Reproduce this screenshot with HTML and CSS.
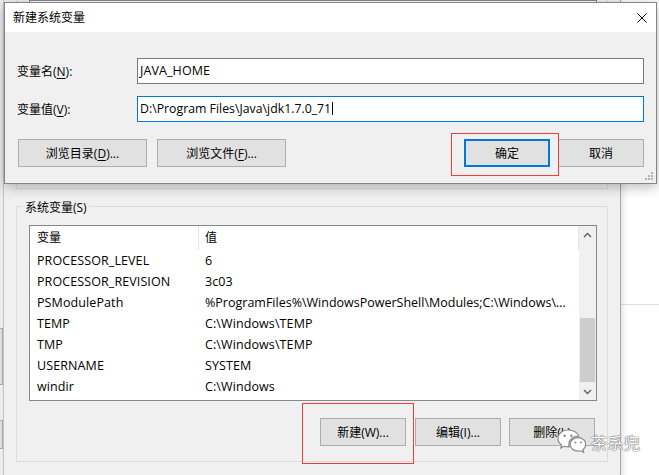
FILE: index.html
```html
<!DOCTYPE html>
<html lang="zh-CN">
<head>
<meta charset="utf-8">
<title>新建系统变量</title>
<link rel="stylesheet" href="styles.css">
</head>
<body>
<div class="desk">
  <!-- window peeking in on the far left -->
  <div class="left-win">
    <div class="stub stub-a"></div>
    <div class="stub stub-b"></div>
  </div>

  <!-- window on the right, behind everything -->
  <div class="right-win">
    <div class="right-rule"></div>
  </div>

  <!-- 环境变量 window -->
  <div class="back-win">
    <div class="group group-user">
      <div class="list list-user"></div>
    </div>

    <div class="group group-sys">
      <span class="group-label">系统变量(S)</span>
      <div class="list">
        <div class="cols">
          <div class="row head">
            <div class="cell">变量</div>
            <div class="cell">值</div>
          </div>
          <div class="row"><div class="cell latin">PROCESSOR_LEVEL</div><div class="cell latin">6</div></div>
          <div class="row"><div class="cell latin">PROCESSOR_REVISION</div><div class="cell latin">3c03</div></div>
          <div class="row"><div class="cell latin">PSModulePath</div><div class="cell latin tight">%ProgramFiles%\WindowsPowerShell\Modules;C:\Windows\...</div></div>
          <div class="row"><div class="cell latin">TEMP</div><div class="cell latin">C:\Windows\TEMP</div></div>
          <div class="row"><div class="cell latin">TMP</div><div class="cell latin">C:\Windows\TEMP</div></div>
          <div class="row"><div class="cell latin">USERNAME</div><div class="cell latin">SYSTEM</div></div>
          <div class="row"><div class="cell latin">windir</div><div class="cell latin">C:\Windows</div></div>
        </div>
        <div class="vscroll">
          <div class="arrow">
            <svg width="9" height="6" viewBox="0 0 9 6"><polyline points="1,5 4.5,1.5 8,5" fill="none" stroke="#606060" stroke-width="1.4"/></svg>
          </div>
          <div class="track"><div class="thumb"></div></div>
          <div class="arrow">
            <svg width="9" height="6" viewBox="0 0 9 6"><polyline points="1,1 4.5,4.5 8,1" fill="none" stroke="#606060" stroke-width="1.4"/></svg>
          </div>
        </div>
      </div>
      <div class="actions">
        <button class="btn btn-sm btn-new">新建(W)...</button>
        <button class="btn btn-sm">编辑(I)...</button>
        <button class="btn btn-sm">删除(L)</button>
      </div>
    </div>
  </div>

  <!-- 新建系统变量 dialog -->
  <div class="dialog">
    <div class="titlebar">
      <span class="title">新建系统变量</span>
      <svg class="close" width="10" height="10" viewBox="0 0 10 10"><path d="M0.5 0.5 L9.5 9.5 M9.5 0.5 L0.5 9.5" stroke="#000" stroke-width="1" fill="none"/></svg>
    </div>
    <div class="dialog-body">
      <div class="form">
        <label class="label">变量名(<u>N</u>):</label>
        <div class="input latin">JAVA_HOME</div>
        <label class="label">变量值(<u>V</u>):</label>
        <div class="input input-focus path">D:\Program Files\Java\jdk1.7.0_71<span class="caret"></span></div>
      </div>
      <div class="buttons">
        <div class="btn-group btn-group-left">
          <button class="btn btn-wide">浏览目录(<u>D</u>)...</button>
          <button class="btn btn-wide">浏览文件(<u>F</u>)...</button>
        </div>
        <div class="btn-group">
          <button class="btn btn-sm btn-default">确定</button>
          <button class="btn btn-sm">取消</button>
        </div>
      </div>
    </div>
    <svg class="grip" width="9" height="9" viewBox="0 0 9 9">
      <rect x="6" y="0" width="2" height="2" fill="#b4b4b4"/>
      <rect x="3" y="3" width="2" height="2" fill="#b4b4b4"/>
      <rect x="6" y="3" width="2" height="2" fill="#b4b4b4"/>
      <rect x="0" y="6" width="2" height="2" fill="#b4b4b4"/>
      <rect x="3" y="6" width="2" height="2" fill="#b4b4b4"/>
      <rect x="6" y="6" width="2" height="2" fill="#b4b4b4"/>
    </svg>
  </div>

  <!-- highlight frames -->
  <div class="mark mark-ok"></div>
  <div class="mark mark-new"></div>

  <!-- account mark -->
  <div class="brand">
    <svg class="brand-icon" width="30" height="30" viewBox="0 0 30 30">
      <g fill="#fff" stroke="#8a8a8a" stroke-width="1.2">
        <path d="M12 3 C6 3 2 7 2 11.5 C2 14.2 3.4 16.4 5.6 18 L4.8 21 L8.2 19.3 C9.4 19.7 10.7 19.9 12 19.9 C12.4 19.9 12.8 19.9 13.2 19.8 C12.9 19 12.8 18.2 12.8 17.4 C12.8 12.8 17 9.2 22.2 9.2 C22.4 9.2 22.6 9.2 22.8 9.2 C21.7 5.6 17.3 3 12 3 Z"/>
        <path d="M22.2 10.6 C17.7 10.6 14.2 13.6 14.2 17.4 C14.2 21.2 17.7 24.2 22.2 24.2 C23.1 24.2 24 24.1 24.8 23.8 L27.6 25.3 L26.9 22.7 C28.7 21.4 29.8 19.5 29.8 17.4 C29.8 13.6 26.4 10.6 22.2 10.6 Z"/>
      </g>
      <g fill="#8a8a8a">
        <circle cx="8.6" cy="8.8" r="1.2"/>
        <circle cx="15.4" cy="8.8" r="1.2"/>
        <circle cx="19.4" cy="15.6" r="1"/>
        <circle cx="25" cy="15.6" r="1"/>
      </g>
    </svg>
    <span class="brand-name">茶系兜</span>
  </div>
</div>
</body>
</html>
```

FILE: styles.css
```css
* {
  box-sizing: border-box;
}

body {
  margin: 0;
  font-family: "Open Sans", "Noto Sans CJK SC", sans-serif;
  font-size: 12px;
  color: #000;
}

u {
  text-decoration: underline;
  text-underline-offset: 2px;
}

.latin {
  font-size: 12.5px;
  letter-spacing: 0.1px;
}

.latin.tight {
  letter-spacing: 0;
}

.path {
  font-size: 12.3px;
}

/* desktop surface holding the windows */
.desk {
  position: relative;
  width: 659px;
  height: 475px;
  overflow: hidden;
  background: #fff;
}

.left-win {
  position: absolute;
  left: -100px;
  top: 0;
  width: 103px;
  height: 475px;
  background: #f0f0f0;
}

.stub {
  position: absolute;
  right: 0;
  width: 60px;
  background: #e1e1e1;
  border: 1px solid #adadad;
}

.stub-a {
  top: 328px;
  height: 57px;
}

.stub-b {
  top: 420px;
  height: 29px;
}

.right-win {
  position: absolute;
  left: 620px;
  top: 0;
  width: 60px;
  height: 475px;
  background: #fff;
}

.right-rule {
  margin-top: 304px;
  height: 1px;
  background: #dcdcdc;
}

/* environment variables window */
.back-win {
  position: absolute;
  left: 3px;
  top: 0;
  width: 618px;
  height: 480px;
  padding: 0 12px;
  background: #f0f0f0;
  border-left: 1px solid #c4c4c4;
  border-right: 1px solid #a8a8a8;
  box-shadow: 2px 0 6px rgba(0, 0, 0, 0.12);
}

.group {
  border: 1px solid #dcdcdc;
}

.group-user {
  height: 189px;
  padding-left: 12px;
  border-top: none;
}

.list-user {
  width: 568px;
  height: 170px;
  background: #fff;
  border: 1px solid #828790;
  border-top: none;
}

.group-sys {
  position: relative;
  margin-top: 17px;
  padding: 18px 0 15px 12px;
}

/* caption sits on the group's top border */
.group-label {
  position: absolute;
  left: 6px;
  top: -7px;
  padding: 0 2px;
  line-height: 16px;
  background: #f0f0f0;
}

.list {
  width: 568px;
  height: 176px;
  display: flex;
  background: #fff;
  border: 1px solid #828790;
}

.cols {
  flex: 1;
  min-width: 0;
}

.row {
  display: grid;
  grid-template-columns: 169px 1fr;
  height: 21px;
  line-height: 22px;
}

.row .cell {
  white-space: nowrap;
  overflow: hidden;
  padding-left: 7px;
}

.row .cell + .cell {
  padding-left: 6px;
}

.row.head {
  height: 24px;
  line-height: 24px;
}

.row.head .cell {
  border-right: 1px solid #e5e5e5;
}

.vscroll {
  width: 17px;
  display: flex;
  flex-direction: column;
  background: #f0f0f0;
}

.arrow {
  height: 17px;
  display: flex;
  align-items: center;
  justify-content: center;
}

.track {
  flex: 1;
}

.thumb {
  margin: 75px 1px 0;
  height: 64px;
  background: #cdcdcd;
}

.actions {
  margin-top: 17px;
  padding-right: 12px;
  display: flex;
  justify-content: flex-end;
  gap: 8px;
}

.btn-new {
  margin-right: 1px;
}

/* buttons */
.btn {
  height: 28px;
  padding: 0;
  font: inherit;
  color: #000;
  background: #e1e1e1;
  border: 1px solid #adadad;
  border-radius: 0;
}

.btn-wide {
  width: 129px;
}

.btn-sm {
  width: 86px;
}

.btn-default {
  border: 2px solid #0078d7;
}

/* 新建系统变量 dialog */
.dialog {
  position: absolute;
  left: 4px;
  top: 2px;
  width: 653px;
  height: 182px;
  background: #f0f0f0;
  border: 1px solid #858585;
  box-shadow: 0 3px 12px rgba(0, 0, 0, 0.28);
}

.titlebar {
  height: 29px;
  padding: 0 9px 0 8px;
  display: flex;
  align-items: center;
  justify-content: space-between;
  background: #fff;
}

.title {
  line-height: 16px;
}

.dialog-body {
  padding: 26px 12px 0;
}

.form {
  display: grid;
  grid-template-columns: 120px 1fr;
  row-gap: 12px;
  align-items: center;
}

.input {
  height: 26px;
  line-height: 24px;
  padding-left: 2px;
  background: #fff;
  border: 1px solid #7a7a7a;
  white-space: nowrap;
}

.input-focus {
  border-color: #0078d7;
}

.caret {
  display: inline-block;
  width: 1px;
  height: 13px;
  margin-left: 1px;
  vertical-align: -2px;
  background: #000;
}

.buttons {
  margin-top: 17px;
  display: flex;
  justify-content: space-between;
}

.btn-group {
  display: flex;
  gap: 8px;
}

.btn-group-left {
  gap: 10px;
  margin-left: 1px;
}

.grip {
  position: absolute;
  right: 2px;
  bottom: 2px;
}

/* red highlight frames */
.mark {
  position: absolute;
  border: 1px solid #f23d3d;
}

.mark-ok {
  left: 451px;
  top: 133px;
  width: 108px;
  height: 43px;
}

.mark-new {
  left: 302px;
  top: 403px;
  width: 112px;
  height: 61px;
}

/* account mark in the corner */
.brand {
  position: absolute;
  left: 556px;
  top: 427px;
  display: flex;
  align-items: center;
  gap: 5px;
}

.brand-name {
  font-family: "Noto Sans CJK SC", sans-serif;
  font-size: 16px;
  color: #fff;
  letter-spacing: 0.5px;
  text-shadow: 0 0 1px #666, 0 0 1px #666, 0 0 1px #666;
}
```
